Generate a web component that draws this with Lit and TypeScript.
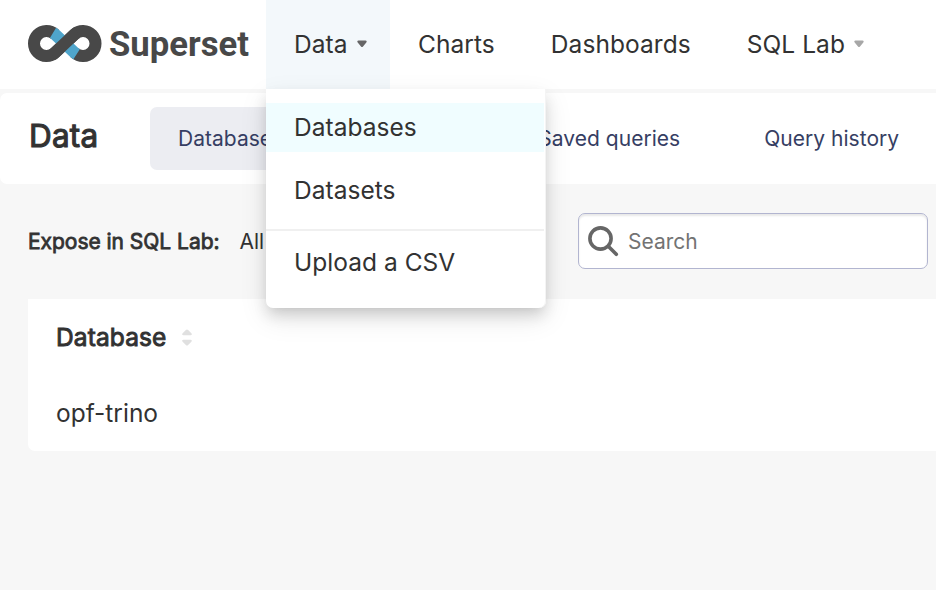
import { LitElement, html, css, svg } from "lit";
import { customElement } from "lit/decorators.js";

const caret = html`<svg class="caret" width="10" height="8" viewBox="0 0 10 8"><path d="M1.500.5h7c1.300 0 1.500 1.100.8 1.900L6 6.500c-.6.7-1.400.7-2 0L.7 2.400C0 1.600.2.5 1.500.5z" fill="currentColor"/></svg>`;
const sortArrow = svg`<path d="M3.900 1c.7-.8 1.500-.8 2.200 0l3.300 3.200c.8.800.5 2-.7 2H1.300c-1.200 0-1.500-1.200-.7-2z" fill="#e0e0e0"/>`;

@customElement("app-root")
export class AppRoot extends LitElement {
  static styles = css`
    :host {
      display: block;
      box-sizing: border-box;
      height: 590px;
      overflow: hidden;
      background: #f7f7f7;
      color: #323232;
      font: 24.5px/34px Inter, "Liberation Sans", sans-serif;
    }
    * { box-sizing: border-box; }
    svg { display: block; flex: none; overflow: visible; }
    .nav { display: flex; height: 89px; background: #fff; }
    .brand { width: 266px; padding: 25px 0 0 28px; }
    .wordmark { font: 700 35.2px Roboto, sans-serif; fill: #484848; }
    .item { position: relative; display: flex; align-items: center; padding: 0 28px 2px; letter-spacing: .06px; white-space: nowrap; }
    .link { display: flex; align-items: center; gap: 9px; }
    .caret { color: #a7a7a7; margin-top: 1px; }
    .open { width: 124px; background: #f3f8fb; }
    .open .caret { color: #666; }
    .menu {
      position: absolute; z-index: 2; left: 0; top: 89px; width: 280px; height: 219px;
      padding: 14px 2px 0 0; background: #fff; border-radius: 0 0 7px 7px; letter-spacing: .03px;
      box-shadow: inset -1px 0 #f4f4f4, 0 5px 10px -7px rgba(0,0,0,.12), 0 10px 28px rgba(0,0,0,.1), 0 8px 14px rgba(0,0,0,.11);
    }
    .entry { height: 49px; padding: 0 28px; line-height: 49px; }
    .entry + .entry { margin-top: 14px; }
    .current { background: #f0fdff; }
    .rule { height: 2px; margin: 14px 0 7px; background: #f0f0f0; }
    .sub { display: flex; height: 91px; margin-top: 4px; padding: 14px 0 0 28px; background: #fff; border-radius: 7px 0 0 7px; overflow: hidden; }
    .title { width: 122px; padding-left: 1px; font-size: 31.5px; line-height: 58px; letter-spacing: .2px; -webkit-text-stroke: 1.1px currentColor; }
    .tabs { display: flex; gap: 28px; color: #363e63; font-size: 21px; line-height: 63px; letter-spacing: .03px; white-space: nowrap; }
    .tab { height: 63px; padding: 0 28px; border-radius: 7px; }
    .selected { background: #ecedf2; }
    .filters { display: flex; align-items: center; height: 115px; padding: 0 8px 1px 28px; font-size: 21px; }
    .filters > span { padding-top: 2px; }
    .label { -webkit-text-stroke: .8px currentColor; margin-right: 20px; letter-spacing: -.03px; }
    .search {
      display: flex; align-items: center; gap: 9px; width: 350px; height: 56px; margin-left: auto; padding: 1px 0 0 9px;
      border: 1px solid #b2b5d0; border-radius: 7px; background: #fff; color: #737373; box-shadow: inset 0 2px 2px rgba(0,0,0,.09);
    }
    .table { height: 152px; margin-left: 28px; padding: 0 28px; background: #fff; border-radius: 0 0 0 7px; }
    .row { display: flex; align-items: center; height: 76px; gap: 15px; }
    .strong { -webkit-text-stroke: .9px currentColor; letter-spacing: .12px; }
  `;

  render() {
    return html`
      <header class="nav">
        <div class="brand">
          <svg width="224" height="42" viewBox="0 0 224 42">
            <g fill="none" stroke-width="12">
              <path d="M27.060 9.400A12.500 12.500 0 1 0 27.060 27.600L46.440 9.400A12.500 12.500 0 1 1 46.440 27.600" stroke="#484848"/>
              <path d="M25 7.800Q26 8.400 27.060 9.400L46.440 27.600Q47.500 28.600 48.600 29.300" stroke="#4fa5cb"/>
              <path d="M24 29.800Q25.500 29.100 27.060 27.600L46.440 9.400Q48 7.900 49.500 7.200" stroke="#484848"/>
            </g>
            <text class="wordmark" x="81" y="31" textLength="140" lengthAdjust="spacingAndGlyphs">Superset</text>
          </svg>
        </div>
        <div class="item open">
          <span class="link">Data ${caret}</span>
          <div class="menu">
            <div class="entry current">Databases</div>
            <div class="entry">Datasets</div>
            <div class="rule"></div>
            <div class="entry">Upload a CSV</div>
          </div>
        </div>
        <div class="item">Charts</div>
        <div class="item">Dashboards</div>
        <div class="item"><span class="link">SQL Lab ${caret}</span></div>
      </header>
      <section class="sub">
        <div class="title">Data</div>
        <div class="tabs">
          <div class="tab selected">Databases</div>
          <div class="tab">Datasets</div>
          <div class="tab">Saved queries</div>
          <div class="tab">Query history</div>
        </div>
      </section>
      <section class="filters">
        <span class="label">Expose in SQL Lab:</span><span>All</span>
        <div class="search">
          <svg width="31" height="31" viewBox="0 0 31 31" fill="none" stroke="#666">
            <circle cx="12.500" cy="12.500" r="10.600" stroke-width="3.600"/>
            <path d="M20.500 20.500l7.800 7.800" stroke-width="3.600" stroke-linecap="round"/>
          </svg>
          <span>Search</span>
        </div>
      </section>
      <section class="table">
        <div class="row"><span class="strong">Database</span>
          <svg width="10" height="17" viewBox="0 0 10 17">${sortArrow}<g transform="matrix(1 0 0 -1 0 17)">${sortArrow}</g></svg>
        </div>
        <div class="row">opf-trino</div>
      </section>
    `;
  }
}
